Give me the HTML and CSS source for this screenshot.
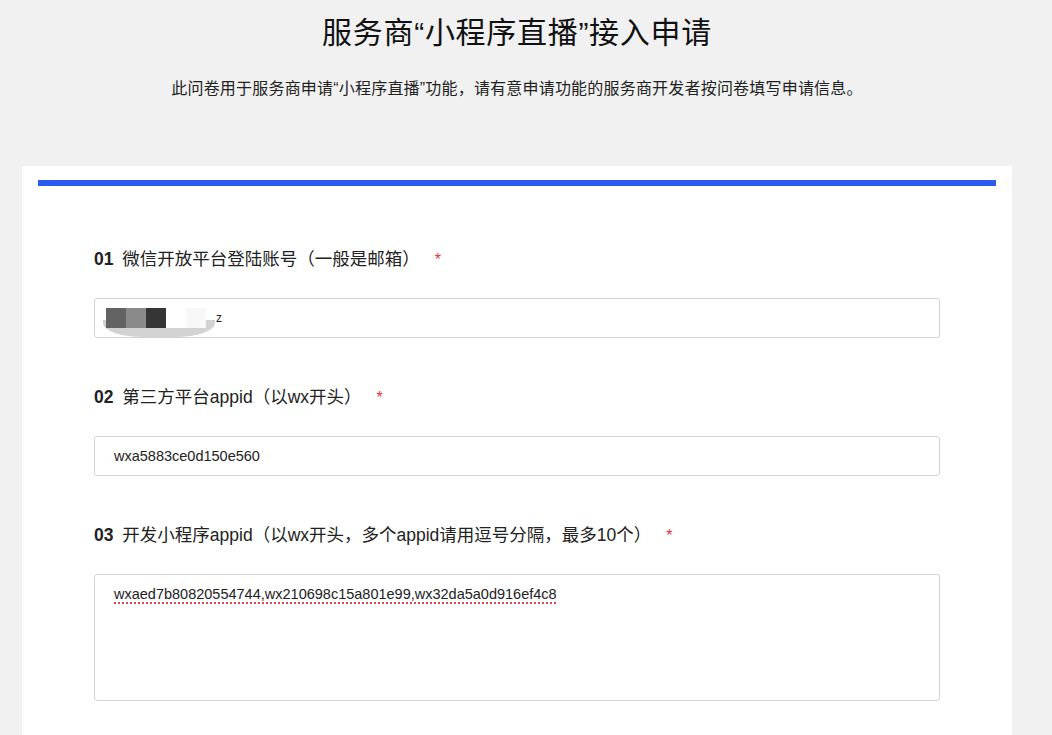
FILE: index.html
```html
<!DOCTYPE html>
<html lang="zh-CN">
<head>
  <meta charset="UTF-8" />
  <meta name="viewport" content="width=device-width, initial-scale=1.0"/>
  <title>服务商“小程序直播”接入申请</title>
  <link rel="stylesheet" href="styles.css">
</head>
<body>
<div class="page-head">
  <h1 class="title">服务商“小程序直播”接入申请</h1>
  <p class="intro">此问卷用于服务商申请“小程序直播”功能，请有意申请功能的服务商开发者按问卷填写申请信息。</p>
</div>

<div class="form-card">
  <div class="top-bar"></div>

  <div class="questions">
    <div class="question">
      <div class="q-label"><span class="q-num">01</span> 微信开放平台登陆账号（一般是邮箱）<span class="required">*</span></div>
      <div class="q-input">
        <span class="mosaic">
          <span class="blk blk1"></span><span class="blk blk2"></span><span class="blk blk3"></span><span class="blk blk4"></span><span class="blk blk5"></span>
          <span class="smudge"></span>
        </span>
        <span class="tail">z</span>
      </div>
    </div>

    <div class="question">
      <div class="q-label"><span class="q-num">02</span> 第三方平台appid（以wx开头）<span class="required">*</span></div>
      <div class="q-input">wxa5883ce0d150e560</div>
    </div>

    <div class="question">
      <div class="q-label"><span class="q-num">03</span> 开发小程序appid（以wx开头，多个appid请用逗号分隔，最多10个）<span class="required">*</span></div>
      <div class="q-textarea"><span class="misspelled">wxaed7b80820554744,wx210698c15a801e99,wx32da5a0d916ef4c8</span></div>
    </div>
  </div>
</div>
</body>
</html>
```

FILE: styles.css
```css
body {
  margin: 0;
  background-color: #f1f1f1;
  font-family: "Liberation Sans", "Noto Sans CJK SC", sans-serif;
  color: #222;
}

.page-head {
  text-align: center;
  padding: 13px 18px 0 0;
  height: 153px;
}

.title {
  margin: 0;
  font-size: 30px;
  font-weight: normal;
  line-height: 40px;
  letter-spacing: 0.7px;
  color: #111;
}

.intro {
  margin: 25px 0 0;
  font-size: 16px;
  line-height: 22px;
  letter-spacing: 0.2px;
  color: #222;
}

.form-card {
  width: 958px;
  margin-left: 22px;
  padding: 14px 16px 40px;
  background-color: #fff;
}

.top-bar {
  height: 6px;
  background-color: #2b5cee;
}

.questions {
  padding: 61px 56px 0;
}

.question {
  margin-bottom: 47px;
}

.q-label {
  height: 24px;
  font-size: 17.5px;
  line-height: 24px;
  color: #222;
  margin-bottom: 27px;
}

.q-num {
  font-weight: bold;
  margin-right: 4px;
}

.required {
  color: #e2333b;
  margin-left: 15px;
  font-size: 16px;
}

.q-input {
  height: 38px;
  border: 1px solid #d4d4d4;
  border-radius: 3px;
  padding: 0 19px;
  display: flex;
  align-items: center;
  font-size: 14.5px;
  color: #222;
}

.q-textarea {
  height: 116px;
  border: 1px solid #d4d4d4;
  border-radius: 3px;
  padding: 9px 19px 0;
  font-size: 14.5px;
  line-height: 20px;
  color: #222;
}

.misspelled {
  text-decoration: underline dotted #e8444a;
  text-decoration-thickness: 2px;
  text-underline-offset: 3px;
}

.mosaic {
  position: relative;
  display: flex;
  margin-left: -8px;
  height: 20px;
}

.blk {
  width: 20px;
  height: 20px;
  position: relative;
  z-index: 1;
}

.blk1 { background-color: #636363; }
.blk2 { background-color: #8a8a8a; }
.blk3 { background-color: #353535; }
.blk4 { background-color: #fff; }
.blk5 { background-color: #f8f8f8; }

.smudge {
  position: absolute;
  left: -3px;
  top: 12px;
  width: 112px;
  height: 17px;
  background-color: #d2d2d2;
  border-radius: 0 0 40px 40px / 0 0 14px 14px;
}

.tail {
  margin-left: 10px;
  font-size: 12px;
}
```
